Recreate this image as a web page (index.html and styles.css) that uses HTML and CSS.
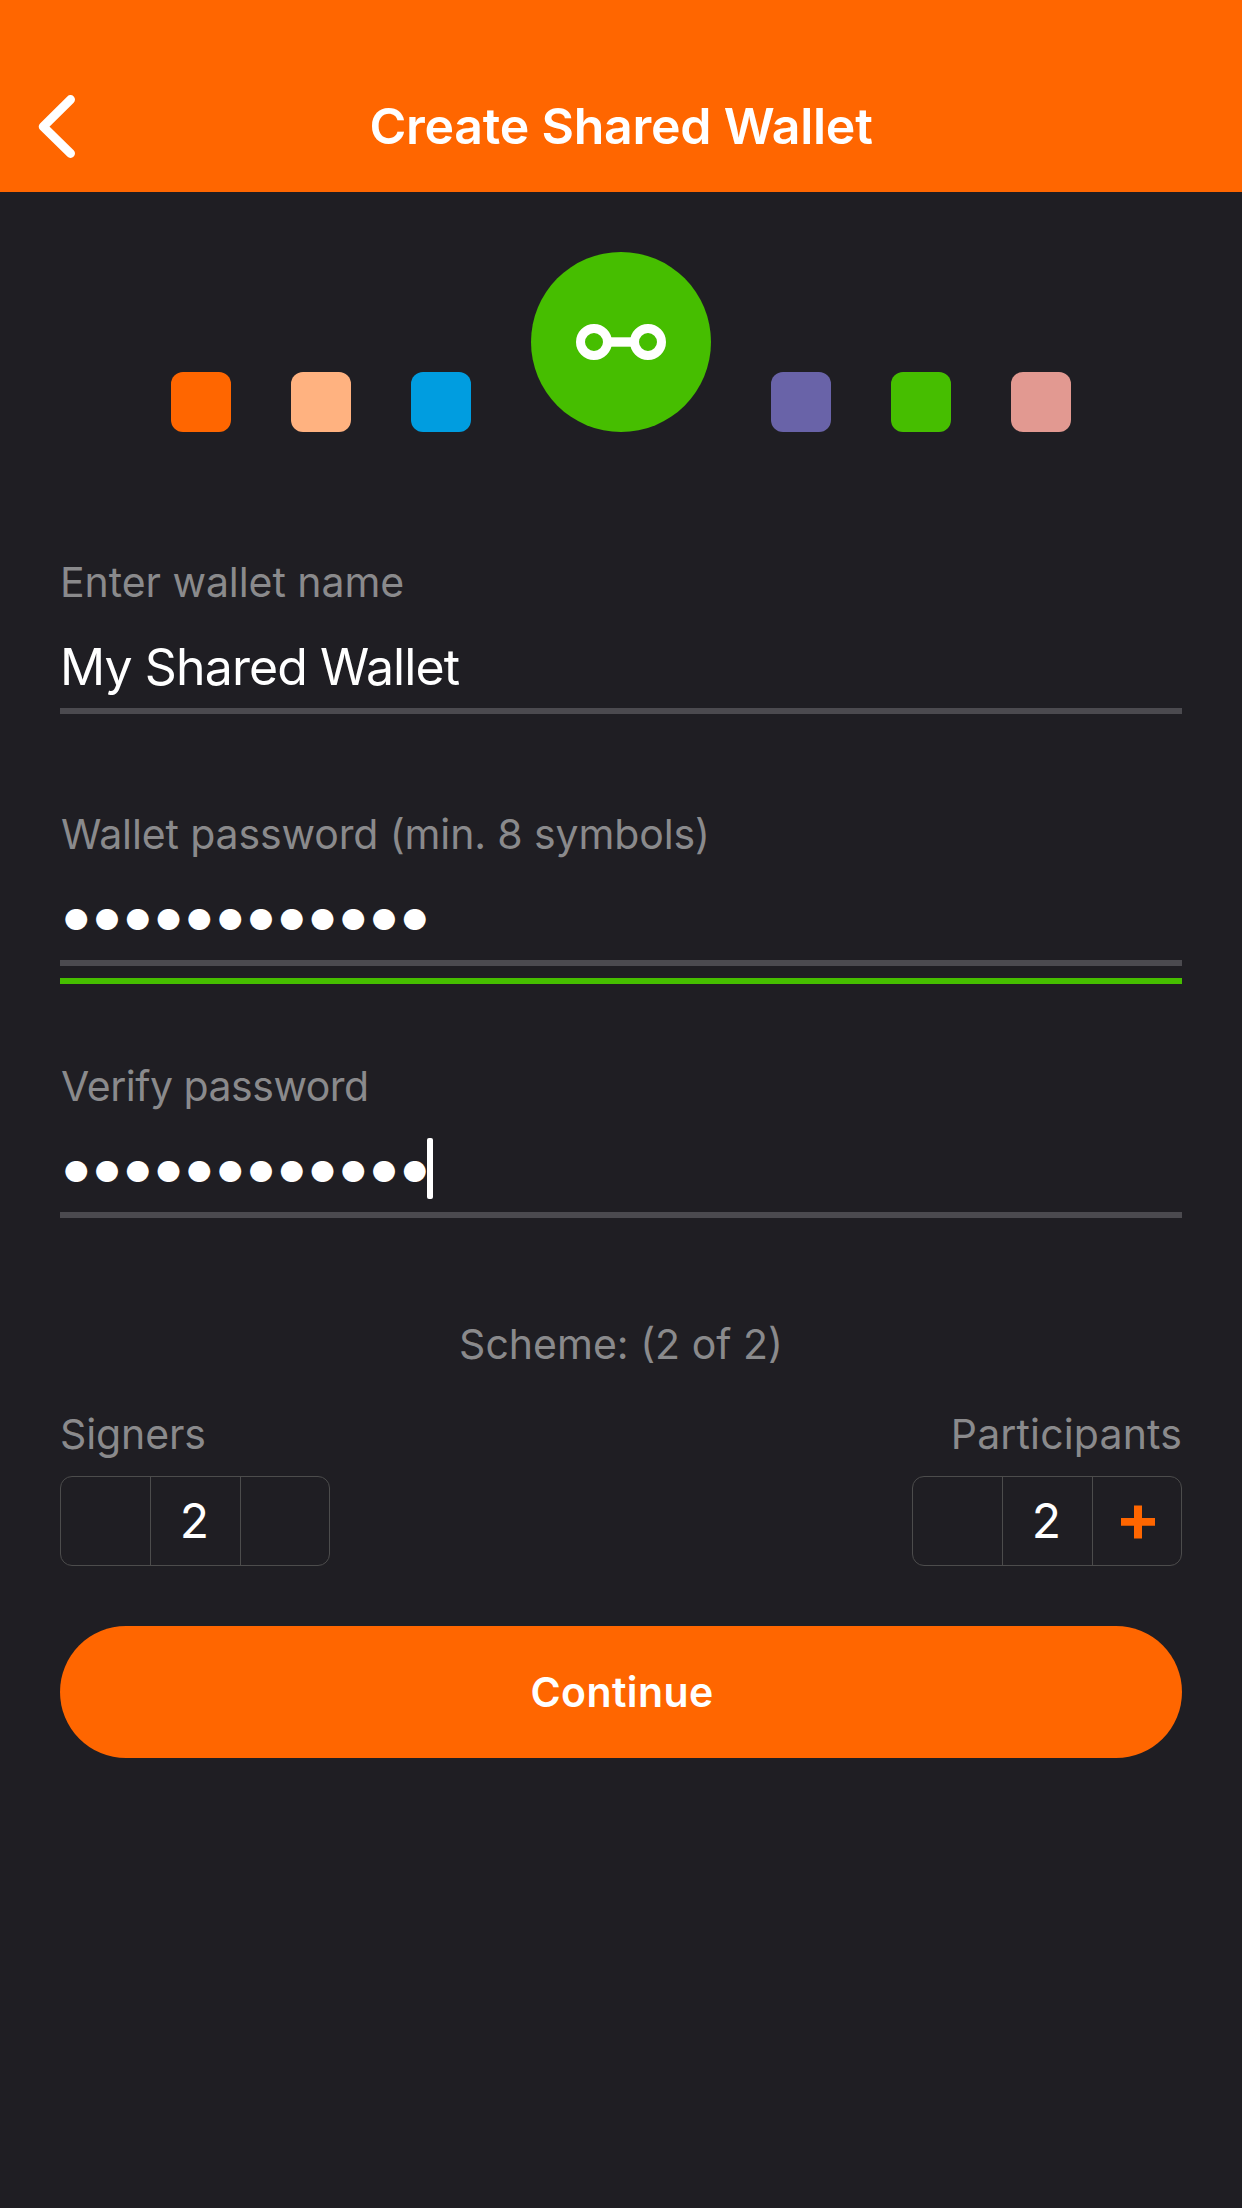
FILE: index.html
```html
<!DOCTYPE html>
<html lang="en">
<head>
<meta charset="utf-8">
<title>Create Shared Wallet</title>
<link rel="stylesheet" href="styles.css">
</head>
<body>
<header class="header">
  <svg class="back" viewBox="0 0 60 80" aria-label="Back"><path d="M40.5 13.6 13.2 40.6 40.5 67.4" fill="none" stroke="#fff" stroke-width="9" stroke-linecap="round" stroke-linejoin="round"/></svg>
  <h1 class="title">Create Shared Wallet</h1>
</header>
<main class="main">
  <div class="palette">
    <span class="swatch orange"></span>
    <span class="swatch peach"></span>
    <span class="swatch blue"></span>
    <span class="badge">
      <svg width="90" height="36" viewBox="0 0 90 36" fill="none" stroke="#fff"><circle cx="18" cy="18" r="13.5" stroke-width="9"/><circle cx="72" cy="18" r="13.5" stroke-width="9"/><path d="M34 18H56" stroke-width="9.4"/></svg>
    </span>
    <span class="swatch violet"></span>
    <span class="swatch green"></span>
    <span class="swatch pink"></span>
  </div>
  <form class="form">
    <div class="field">
      <label class="label name-label">Enter wallet name</label>
      <div class="input">My Shared Wallet</div>
    </div>
    <div class="field">
      <label class="label password-label">Wallet password (min. 8 symbols)</label>
      <div class="input"><span class="mask">●●●●●●●●●●●●</span></div>
      <div class="strength"></div>
    </div>
    <div class="field">
      <label class="label verify-label">Verify password</label>
      <div class="input"><span class="mask">●●●●●●●●●●●●</span><span class="caret"></span></div>
    </div>
    <p class="label scheme">Scheme: (2 of 2)</p>
    <div class="steppers">
      <div class="group">
        <span class="label signers">Signers</span>
        <div class="stepper"><span class="cell"></span><span class="cell value">2</span><span class="cell"></span></div>
      </div>
      <div class="group end">
        <span class="label participants">Participants</span>
        <div class="stepper"><span class="cell"></span><span class="cell value">2</span><span class="cell"><svg class="plus" width="34" height="34" viewBox="0 0 34 34"><path d="M13 0.4h8v12.6h13v7.8H21v12.6h-8V20.8H0V13h13z" fill="#ff6600"/></svg></span></div>
      </div>
    </div>
    <button class="continue" type="button">Continue</button>
  </form>
</main>
</body>
</html>
```
FILE: styles.css
```css
* { box-sizing: border-box; }
body {
  margin: 0;
  min-height: 2208px;
  background: #1f1e23;
  color: #fff;
  font-family: Inter, "Liberation Sans", sans-serif;
}
.header {
  display: grid;
  grid-template-columns: 60px 1fr 60px;
  align-items: center;
  height: 192px;
  padding: 60px 30px 0;
  background: #ff6600;
}
.back { width: 60px; height: 80px; }
.title {
  margin: 0;
  text-align: center;
  font-size: 50px;
  line-height: 60px;
  font-weight: 600;
  letter-spacing: -0.24px;
}
.main { padding: 60px; }
.palette {
  display: flex;
  justify-content: center;
  align-items: flex-end;
  gap: 60px;
  margin-bottom: 120px;
}
.swatch { width: 60px; height: 60px; border-radius: 12px; }
.orange { background: #ff6600; }
.peach { background: #ffb280; }
.blue { background: #009de0; }
.violet { background: #6963a8; }
.green { background: #46be00; }
.pink { background: #e29991; }
.badge {
  display: flex;
  align-items: center;
  justify-content: center;
  width: 180px;
  height: 180px;
  border-radius: 50%;
  background: #46be00;
}
.field { height: 252px; }
.label {
  display: block;
  margin: 0;
  color: #8a8a8c;
  font-size: 41px;
  line-height: 60px;
}
.name-label { letter-spacing: -0.06px; }
.password-label { padding-left: 1px; letter-spacing: -0.12px; }
.verify-label { padding-left: 1px; letter-spacing: -0.48px; }
.signers { letter-spacing: -0.1px; }
.participants { letter-spacing: 0.15px; }
.input {
  display: flex;
  align-items: center;
  height: 102px;
  padding-top: 24px;
  padding-bottom: 10px;
  border-bottom: 6px solid #4b4a4f;
  font-size: 50px;
  line-height: 62px;
  letter-spacing: -0.9px;
}
.mask {
  padding-left: 3px;
  padding-top: 1px;
  font-size: 29px;
  letter-spacing: 4.27px;
}
.caret {
  width: 6px;
  height: 61px;
  margin-left: -5px;
  margin-top: -6px;
  border-radius: 2px;
  background: #fff;
}
.strength { height: 6px; margin-top: 12px; background: #46be00; }
.scheme { padding-top: 6px; text-align: center; }
.steppers {
  display: flex;
  justify-content: space-between;
  margin: 30px 0 60px;
}
.group { display: grid; gap: 12px; }
.end { text-align: right; }
.stepper {
  display: grid;
  grid-template-columns: repeat(3, 1fr);
  width: 270px;
  height: 90px;
  border: 1px solid #4c4c4c;
  border-radius: 12px;
}
.cell {
  display: flex;
  align-items: center;
  justify-content: center;
  font-size: 48px;
}
.cell + .cell { border-left: 1px solid #4c4c4c; }
.value { padding-right: 2px; padding-bottom: 1px; }
.plus { margin-left: 2px; margin-top: 1px; }
.continue {
  display: block;
  width: 100%;
  height: 132px;
  padding: 0 0 0 2px;
  border: 0;
  border-radius: 66px;
  background: #ff6600;
  color: #fff;
  font: 600 41px Inter, "Liberation Sans", sans-serif;
  letter-spacing: 0.4px;
}
```
